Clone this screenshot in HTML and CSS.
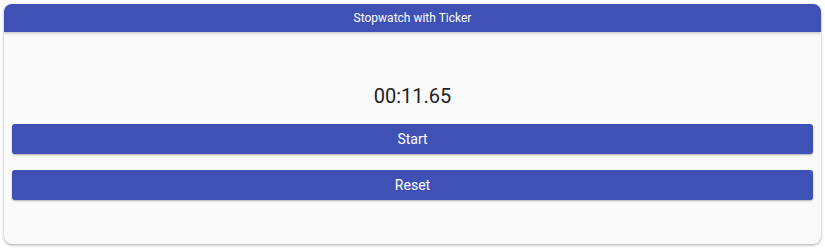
FILE: index.html
```html
<!DOCTYPE html>
<html>
<head>
<meta charset="utf-8">
<link rel="stylesheet" href="styles.css">
</head>
<body>
<div class="card">
  <div class="header">Stopwatch with Ticker</div>
  <div class="content">
    <div class="time">00:11.65</div>
    <button class="btn btn-start">Start</button>
    <button class="btn btn-reset">Reset</button>
  </div>
</div>
</body>
</html>
```
FILE: styles.css
```css
html, body {
  margin: 0;
  padding: 0;
  background: #ffffff;
}
body {
  padding: 4px;
  font-family: Roboto, "Liberation Sans", sans-serif;
}
.card {
  width: 817px;
  height: 240px;
  box-sizing: border-box;
  background: #fafafa;
  border-radius: 8px;
  box-shadow: 0 1px 3px rgba(0,0,0,0.35);
  overflow: hidden;
  display: flex;
  flex-direction: column;
}
.header {
  height: 28px;
  flex: none;
  background: #3f51b5;
  color: #ffffff;
  font-size: 12px;
  line-height: 28px;
  text-align: center;
  box-shadow: 0 1px 3px rgba(0,0,0,0.25);
  position: relative;
  z-index: 1;
}
.content {
  display: flex;
  flex-direction: column;
  padding: 52px 8px 0 8px;
}
.time {
  font-size: 20px;
  line-height: 24px;
  height: 24px;
  text-align: center;
  color: #212121;
  margin-bottom: 16px;
}
.btn {
  display: block;
  height: 30px;
  width: 100%;
  border: none;
  border-radius: 3px;
  background: #3f51b5;
  color: #ffffff;
  font-family: Roboto, "Liberation Sans", sans-serif;
  font-size: 14px;
  padding: 0;
  box-shadow: 0 1px 2px rgba(0,0,0,0.3);
}
.btn-start {
  margin-bottom: 16px;
}
```
